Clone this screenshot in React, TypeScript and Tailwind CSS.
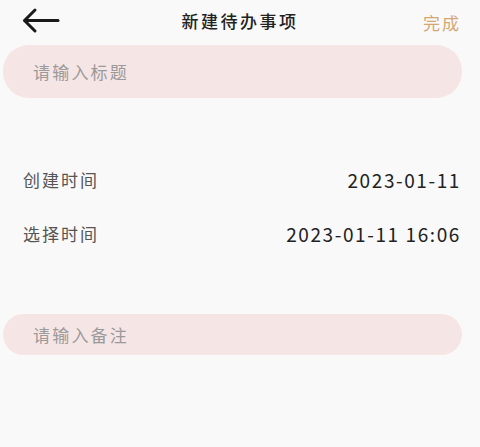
export default function App() {
  return (
    <div
      className="h-[447px] w-[480px] overflow-hidden bg-[#f9f9f9] text-[#333]"
      style={{ fontFamily: '"Noto Sans CJK SC", "Noto Sans", sans-serif' }}
    >
      {/* Header */}
      <div className="relative flex h-[42px] items-center justify-center">
        <button className="absolute left-[22px] top-[7px]">
          <svg width="38" height="27" viewBox="0 0 38 27" fill="none" stroke="#1a1a1a" strokeWidth="3" strokeLinecap="round" strokeLinejoin="round">
            <path d="M36 13.5H3" />
            <path d="M13 3L2.5 13.5L13 24" />
          </svg>
        </button>
        <h1 className="text-[17px] font-medium tracking-[2.5px] text-[#222]">新建待办事项</h1>
        <span className="absolute right-[19px] top-[10px] text-[17px] tracking-[2px] text-[#d4a673]">完成</span>
      </div>

      {/* Title input */}
      <div className="ml-[3px] mt-[3px] flex h-[53px] w-[459px] items-center rounded-[26px] bg-[#f6e5e5] pl-[30px]">
        <span className="text-[17px] tracking-[2.2px] text-[#9a9a9a]">请输入标题</span>
      </div>

      {/* Rows */}
      <div className="mt-[71px] flex flex-col gap-[32px] pl-[23px] pr-[19px]">
        <div className="flex h-[22px] items-center justify-between">
          <span className="text-[17px] tracking-[2px] text-[#555]">创建时间</span>
          <span className="text-[19px] tracking-[1.6px] text-[#222]">2023-01-11</span>
        </div>
        <div className="flex h-[22px] items-center justify-between">
          <span className="text-[17px] tracking-[2px] text-[#555]">选择时间</span>
          <span className="text-[19px] tracking-[1.6px] text-[#222]">2023-01-11 16:06</span>
        </div>
      </div>

      {/* Notes input */}
      <div className="ml-[3px] mt-[69px] flex h-[41px] w-[459px] items-center rounded-[21px] bg-[#f6e5e5] pl-[30px]">
        <span className="text-[17px] tracking-[2.2px] text-[#9a9a9a]">请输入备注</span>
      </div>
    </div>
  )
}
